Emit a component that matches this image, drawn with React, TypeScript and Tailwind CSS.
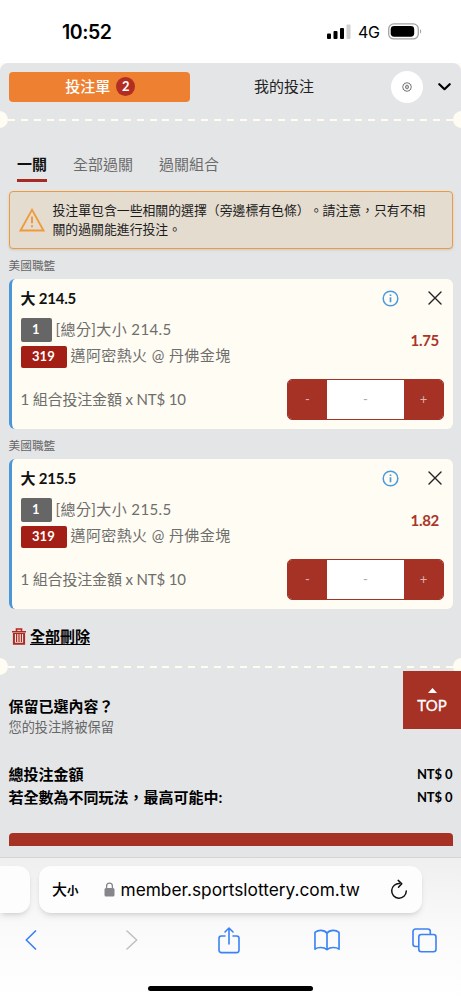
type Bet = {
  league: string;
  pick: string;
  market: string;
  code: string;
  match: string;
  odds: string;
};

const BETS: Bet[] = [
  { league: "美國職籃", pick: "214.5", market: "[總分]大小 214.5", code: "319", match: "邁阿密熱火 @ 丹佛金塊", odds: "1.75" },
  { league: "美國職籃", pick: "215.5", market: "[總分]大小 215.5", code: "319", match: "邁阿密熱火 @ 丹佛金塊", odds: "1.82" },
];

function StatusBar() {
  return (
    <header className="flex h-[63px] items-center justify-between bg-white pl-[62px] pr-[39px] font-['Inter','Liberation_Sans',sans-serif]">
      <span className="text-[19.5px] font-semibold leading-6 tracking-[-0.45px] text-black">10:52</span>
      <div className="flex items-center">
        <svg width="24" height="16" viewBox="0 0 24 16" fill="#000">
          <rect x="0" y="9.5" width="4" height="5.5" rx="1" />
          <rect x="6.5" y="7" width="4" height="8" rx="1" />
          <rect x="13" y="4" width="4" height="11" rx="1" />
          <rect x="19.5" y="0.5" width="4" height="14.5" rx="1" fill="#d0d0d0" />
        </svg>
        <span className="ml-[7px] w-[22px] text-[16px] leading-6 tracking-[-0.3px] text-black">4G</span>
        <svg className="ml-[8px]" width="34" height="17" viewBox="0 0 34 17">
          <rect x="0.7" y="0.9" width="29.6" height="15" rx="5" fill="none" stroke="#a3a3a3" strokeWidth="1.3" />
          <rect x="2.7" y="3" width="23.5" height="10.7" rx="3.4" fill="#000" />
          <path d="M32 6.2c1.6.6 1.6 3.8 0 4.4z" fill="#a3a3a3" />
        </svg>
      </div>
    </header>
  );
}

function TicketDivider() {
  return (
    <div className="flex h-[18px] items-center overflow-hidden">
      <span className="-ml-[9px] size-[17px] shrink-0 rounded-full bg-[#fffcf3]" />
      <span className="mt-[2px] h-[2px] flex-1 bg-[repeating-linear-gradient(90deg,#fffcf0_0_7px,transparent_7px_12.87px)]" />
      <span className="-mr-[9px] size-[17px] shrink-0 rounded-full bg-[#fffcf3]" />
    </div>
  );
}

function SlipHeader() {
  return (
    <div className="flex h-[47px] items-center pl-[8.5px]">
      <button className="flex h-[30px] w-[181.5px] items-center justify-center gap-[6px] rounded-[4px] bg-[#ee8131] pl-[2px] text-[15px] leading-none text-white">
        <span className="font-medium">投注單</span>
        <span className="flex size-[19px] items-center justify-center rounded-full bg-[#b22d22] text-[13px] font-bold">2</span>
      </button>
      <button className="flex-1 pr-[13px] text-center text-[15px] text-[#222]">我的投注</button>
      <button className="flex size-8 items-center justify-center rounded-full bg-white">
        <svg width="10" height="10" viewBox="0 0 20 20" fill="none" stroke="#555" strokeWidth="1.6">
          <path d="M8 2.5 10 1l2 1.5 2.4-.4 1 2.3 2.4 1L17.5 8 19 10l-1.5 2 .3 2.6-2.4 1-1 2.3-2.4-.4L10 19l-2-1.5-2.4.4-1-2.3-2.4-1L2.5 12 1 10l1.5-2-.3-2.6 2.4-1 1-2.3z" />
          <ellipse cx="10" cy="10" rx="3" ry="3.8" />
          <path d="M10 8.5v3" />
        </svg>
      </button>
      <svg className="ml-[15px] mr-[10px]" width="13" height="8" viewBox="0 0 13 8" fill="none" stroke="#000" strokeWidth="2.2" strokeLinecap="round" strokeLinejoin="round">
        <path d="m1.3 1.2 5.2 5 5.2-5" />
      </svg>
    </div>
  );
}

function Notice() {
  return (
    <div className="flex h-[58px] items-center rounded-[4px] border-[1.3px] border-[#ef9a3e] bg-[#e5dcd0] pl-[9px] shadow-sm">
      <svg width="26" height="24" viewBox="0 0 26 24" fill="none" stroke="#f09a3c" strokeWidth="1.8">
        <path d="M13 1.8 24.5 22.5h-23z" strokeLinejoin="miter" />
        <path d="M13 8.5v6.7M13 17.3v2" strokeWidth="2" />
      </svg>
      <p className="ml-[8px] whitespace-nowrap text-[12.87px] leading-[19.3px] text-[#1c1c1c]">
        投注單包含一些相關的選擇（旁邊標有色條）。請注意，只有不相
        <br />
        關的過關能進行投注。
      </p>
    </div>
  );
}

function Stepper() {
  return (
    <div className="flex h-[41px] w-[157px] overflow-hidden rounded-[5px] border border-[#a63226] bg-white text-[13px] text-[#d9b4ae]">
      <button className="w-[39px] bg-[#a63226]">-</button>
      <span className="flex flex-1 items-center justify-center text-[#aaa]">-</span>
      <button className="w-[39px] bg-[#a63226]">+</button>
    </div>
  );
}

function BetCard({ bet }: { bet: Bet }) {
  return (
    <section>
      <h3 className="flex h-[30px] items-center pt-[4px] text-[11.7px] text-[#666]">{bet.league}</h3>
      <div className="h-[150px] rounded-[6px] border-l-[3px] border-[#4b96d8] bg-[#fffcf4] pl-[9px] pr-[8.5px]">
        <div className="flex h-[38px] items-center text-[#111]">
          <span className="flex-1 text-[15px] font-bold tracking-[-0.2px]">大 {bet.pick}</span>
          <svg width="17" height="17" viewBox="0 0 17 17" fill="none" stroke="#4b9bdc" strokeWidth="1.5">
            <circle cx="8.5" cy="8.5" r="7.3" />
            <path d="M8.5 7.2v5M8.5 4.4v1.6" strokeWidth="1.7" />
          </svg>
          <svg className="ml-[28.5px] mr-[2.5px]" width="14" height="14" viewBox="0 0 14 14" stroke="#222" strokeWidth="1.4" strokeLinecap="round">
            <path d="m1 1 12 12M13 1 1 13" />
          </svg>
        </div>
        <div className="flex h-[51px] items-center justify-between">
          <div className="flex flex-col gap-[4px] text-[15px] leading-none tracking-[0.4px] text-[#6e6e6b]">
            <div className="flex h-[24px] items-center gap-[4px]">
              <span className="flex h-full w-[31px] items-center justify-center rounded-[2px] bg-[#666] text-[13px] font-bold text-white">1</span>
              <span>{bet.market}</span>
            </div>
            <div className="flex h-[22px] items-center gap-[4px]">
              <span className="flex h-full w-[46px] items-center justify-center rounded-[2px] bg-[#a31e14] text-[13px] font-bold tracking-[0.2px] text-white">{bet.code}</span>
              <span className="pb-[2px]">{bet.match}</span>
            </div>
          </div>
          <span className="pb-[5px] pr-[5px] text-[15px] font-bold tracking-[-0.3px] text-[#a93628]">{bet.odds}</span>
        </div>
        <div className="mt-[11px] flex items-center justify-between text-[15px] text-[#6e6e6b]">
          <span className="tracking-[-0.16px]">1 組合投注金額 x NT$ 10</span>
          <Stepper />
        </div>
      </div>
    </section>
  );
}

function BrowserBar() {
  return (
    <footer className="flex h-[143px] flex-col border-t border-[#d4d5d6] bg-linear-to-b from-[#efefef] via-[#fafafa] to-white font-['Inter','Liberation_Sans','Noto_Sans_CJK_TC',sans-serif]">
      <div className="mt-[8px] flex h-[47px] gap-[9px]">
        <div className="w-[30px] rounded-r-[12px] bg-[#fdfdfd] shadow-md" />
        <div className="flex w-[383px] items-center rounded-[12px] bg-[#fdfdfd] pl-[13px] pr-[14px] text-black shadow-md">
          <span className="flex items-baseline font-medium leading-none">
            <span className="text-[15px]">大</span>
            <span className="text-[11.5px] font-bold">小</span>
          </span>
          <svg className="ml-[25px] mr-[6px]" width="11" height="15" viewBox="0 0 11 15">
            <rect x="0.5" y="6" width="10" height="8.5" rx="1.5" fill="#87878b" />
            <path d="M2.6 7V4a2.9 2.9 0 0 1 5.8 0v3" fill="none" stroke="#87878b" strokeWidth="1.3" />
          </svg>
          <span className="flex-1 whitespace-nowrap pt-px text-[17.3px]">member.sportslottery.com.tw</span>
          <svg width="18" height="21" viewBox="0 0 18 21" fill="none" stroke="#111" strokeWidth="1.5" strokeLinecap="round" strokeLinejoin="round">
            <path d="M9.8 4.6A7.3 7.3 0 1 0 16.3 12" />
            <path d="m8.2 1.4 3.6 3.3-3.3 3.6" />
          </svg>
        </div>
      </div>
      <nav className="mt-[12px] flex h-[30px] items-center pl-[25px] text-[#3b82f6]">
        <svg width="12" height="20" viewBox="0 0 12 20" fill="none" stroke="currentColor" strokeWidth="1.7" strokeLinecap="round" strokeLinejoin="round">
          <path d="M10.5 1 1.3 10l9.2 9" />
        </svg>
        <svg className="ml-[88.5px] text-[#bfbfbf]" width="12" height="20" viewBox="0 0 12 20" fill="none" stroke="currentColor" strokeWidth="1.5" strokeLinecap="round" strokeLinejoin="round">
          <path d="m1 1 9.7 9L1 19" />
        </svg>
        <svg className="ml-[80px]" width="22" height="27" viewBox="0 0 22 27" fill="none" stroke="currentColor" strokeWidth="1.6" strokeLinecap="round" strokeLinejoin="round">
          <path d="M7 9H3.3A2.3 2.3 0 0 0 1 11.3v12a2.3 2.3 0 0 0 2.3 2.3h15.4a2.3 2.3 0 0 0 2.3-2.3v-12A2.3 2.3 0 0 0 18.7 9H15" />
          <path d="M11 17V1.5M7 5l4-4 4 4" />
        </svg>
        <svg className="ml-[74px]" width="26" height="22" viewBox="0 0 27 22" fill="none" stroke="currentColor" strokeWidth="1.7" strokeLinejoin="round">
          <path d="M13.5 4C12 1.8 9.5 1 7 1S2.5 1.8 1 3v17.5c1.5-1.2 3.5-1.7 6-1.7s4.7.6 6.5 2.2c1.8-1.6 4-2.2 6.5-2.2s4.5.5 6 1.7V3c-1.5-1.2-3.5-2-6-2s-5 .8-6.5 3zM13.5 4v17" />
        </svg>
        <svg className="ml-[72.5px]" width="25" height="25" viewBox="0 0 25 25" fill="none" stroke="currentColor" strokeWidth="1.6" strokeLinejoin="round">
          <path d="M6.5 18.5h-3A2.5 2.5 0 0 1 1 16V3.5A2.5 2.5 0 0 1 3.5 1h12.3a2.5 2.5 0 0 1 2.5 2.5v3" />
          <rect x="6.8" y="6.5" width="17.2" height="17.2" rx="2.5" />
        </svg>
      </nav>
      <div className="mx-auto mt-[31px] h-[5px] w-[165px] rounded-full bg-black" />
    </footer>
  );
}

export default function App() {
  return (
    <div
      lang="zh-Hant-TW"
      className="relative h-[1000px] w-[461px] overflow-hidden bg-[#fffcf4] font-['Lato','Noto_Sans_CJK_TC',sans-serif] [text-spacing-trim:space-all]"
    >
      <StatusBar />
      <main className="flex h-[794px] flex-col rounded-t-[8px] bg-[#e4e5e7]">
        <SlipHeader />
        <TicketDivider />
        <nav className="mt-[22px] flex h-[33px] gap-[26px] pl-[17px] text-[15px] text-[#6b6b6b]">
          <span className="h-[32px] border-b-[3px] border-[#a92a22] pt-[3px] font-bold text-[#111]">一關</span>
          <span className="pt-[3px]">全部過關</span>
          <span className="pt-[3px]">過關組合</span>
        </nav>
        <div className="mt-[8px] px-[8.5px]">
          <Notice />
          {BETS.map((bet) => (
            <BetCard key={bet.pick} bet={bet} />
          ))}
        </div>
        <div className="flex h-[48px] items-center gap-[4px] pl-[12px] pt-[7px]">
          <svg width="14" height="17" viewBox="0 0 14 17" fill="none" stroke="#b0281e">
            <path d="M0 3.7h14M4.5 3.5V1h5v2.5" strokeWidth="1.6" />
            <path d="M1.9 5v10.7h10.2V5" strokeWidth="2" />
            <path d="M4.6 6v8M7 6v8M9.4 6v8M2 5.5h10" strokeWidth="1.2" />
          </svg>
          <a className="text-[15px] font-bold text-black underline underline-offset-2">全部刪除</a>
        </div>
        <TicketDivider />
        <div className="mt-[21px] px-[8.5px] text-black">
          <h2 className="text-[15px] font-bold leading-[20px]">保留已選內容？</h2>
          <p className="mt-[2px] text-[13.2px] leading-[18px] text-[#666]">您的投注將被保留</p>
          <div className="mt-[27px] flex h-[23px] items-center justify-between text-[15px] font-bold">
            <span>總投注金額</span>
            <span className="pt-px text-[13px] tracking-[-0.1px]">NT$ 0</span>
          </div>
          <div className="flex h-[23px] items-center justify-between text-[15px] font-bold">
            <span>若全數為不同玩法，最高可能中:</span>
            <span className="pt-px text-[13px] tracking-[-0.1px]">NT$ 0</span>
          </div>
          <div className="mt-[24px] h-[12.5px] rounded-t-[4px] bg-[#a63226]" />
        </div>
      </main>
      <BrowserBar />

      {/* Back to top */}
      <button className="absolute right-0 top-[670.5px] flex h-[58px] w-[58px] flex-col items-center bg-[#a63226] pt-[17px] text-[15px] leading-none text-white">
        <svg width="9" height="5" viewBox="0 0 9 5" fill="#fff">
          <path d="M4.5 0 9 5H0z" />
        </svg>
        <span className="mt-[5px] [-webkit-text-stroke:0.3px_white]">TOP</span>
      </button>
    </div>
  );
}
